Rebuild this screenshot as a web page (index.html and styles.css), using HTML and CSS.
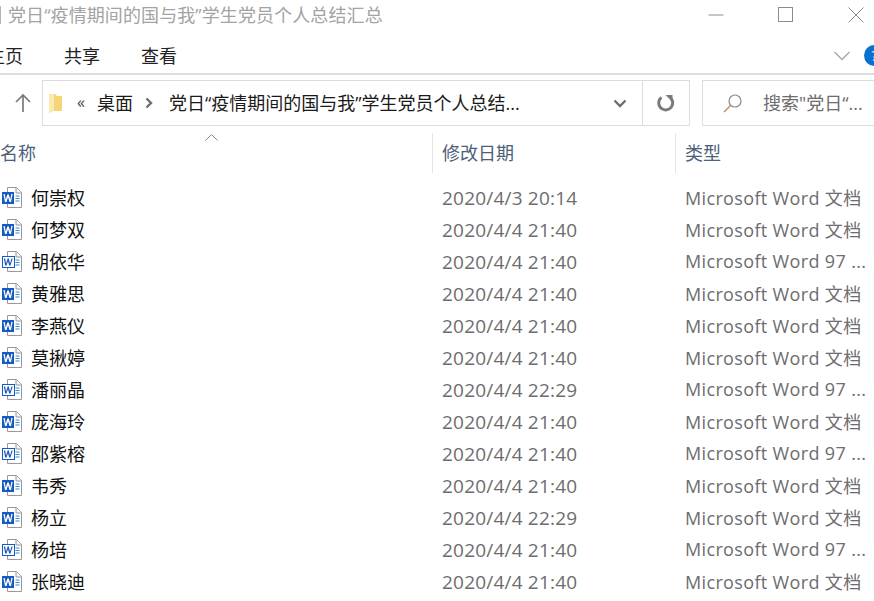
FILE: index.html
```html
<!DOCTYPE html>
<html lang="zh-CN">
<head>
<meta charset="utf-8">
<title>党日“疫情期间的国与我”学生党员个人总结汇总</title>
<link rel="stylesheet" href="styles.css">
</head>
<body>
<svg class="defs" width="0" height="0" aria-hidden="true">
  <symbol id="docx" viewBox="0 0 24 24">
    <path d="M7.5 1.5H16.5L21.5 6.5V21.5H7.5Z" fill="#fff" stroke="#999"/>
    <path d="M16 1.5V7H21.5" fill="#f4f4f4" stroke="#999"/>
    <path d="M15.5 10h4M15.5 12.5h4M15.5 15h4" stroke="#2f8be0"/>
    <rect x="2" y="6" width="12" height="12" fill="#185abd"/>
    <path d="M3.4 8l1.6 8h1.5L8 11.2 9.5 16H11l1.6-8h-1.3l-1 5.4L8.7 8.4H7.3l-1.6 5L4.7 8Z" fill="#fff"/>
  </symbol>
  <symbol id="doc" viewBox="0 0 24 24">
    <path d="M7.5 1.5H16.5L21.5 6.5V21.5H7.5Z" fill="#fff" stroke="#999"/>
    <path d="M16 1.5V7H21.5" fill="#f4f4f4" stroke="#999"/>
    <path d="M15.5 10h4M15.5 12.5h4M15.5 15h4" stroke="#2f8be0"/>
    <rect x="2.5" y="6.5" width="12" height="11" fill="#fff" stroke="#185abd"/>
    <path d="M3.8 8.4l1.4 7.2h1.3L8 11.2l1.2 4.4h1.3l2.2-7.2h-1.2l-1.5 5-1.2-5H7.6l-1.5 5-1-5Z" fill="#185abd"/>
  </symbol>
</svg>
<div class="window">
  <header class="titlebar">
    <span class="title-sep"></span>
    <span class="title">党日“疫情期间的国与我”学生党员个人总结汇总</span>
    <div class="win-controls">
      <svg class="ctl" width="16" height="16" viewBox="0 0 16 16"><path d="M0.5 8H15.5" stroke="#8c8c8c"/></svg>
      <svg class="ctl" width="16" height="16" viewBox="0 0 16 16"><rect x=".5" y=".5" width="14" height="14" fill="none" stroke="#8c8c8c"/></svg>
      <svg class="ctl" width="16" height="16" viewBox="0 0 16 16"><path d="M.5.5l15 15M15.5.5l-15 15" stroke="#8c8c8c"/></svg>
    </div>
  </header>
  <nav class="ribbon">
    <span class="tab tab-home">主页</span>
    <span class="tab">共享</span>
    <span class="tab">查看</span>
    <svg class="ribbon-chevron" width="18" height="10" viewBox="0 0 18 10"><path d="M1.5 1L9 8.5 16.5 1" fill="none" stroke="#a6a6a6" stroke-width="1.3"/></svg>
    <span class="help">?</span>
  </nav>
  <div class="addressrow">
    <svg class="up" width="18" height="20" viewBox="0 0 18 20"><path d="M9 19V2M2 9l7-7 7 7" fill="none" stroke="#7a7a7a" stroke-width="1.7"/></svg>
    <div class="address">
      <svg class="folder" width="15" height="22" viewBox="0 0 15 22"><path d="M1 2h6l2 2h5v15H5l-4 2Z" fill="#f5d47a"/><path d="M1 2h5v17l-5 2Z" fill="#fbe9ae"/></svg>
      <span class="crumb-more">«</span>
      <span class="crumb">桌面</span>
      <svg class="crumb-arrow" width="8" height="12" viewBox="0 0 8 12"><path d="M1.5 1.5L6 6 1.5 10.5" fill="none" stroke="#6e6e6e" stroke-width="2.4"/></svg>
      <span class="crumb crumb-long">党日“疫情期间的国与我”学生党员个人总结...</span>
      <svg class="addr-drop" width="14" height="9" viewBox="0 0 14 9"><path d="M1.5 1.5L7 7l5.5-5.5" fill="none" stroke="#6e6e6e" stroke-width="2.4"/></svg>
      <span class="refresh">
        <svg width="20" height="20" viewBox="0 0 20 20"><path d="M15.2 5.6A7 7 0 1 1 5.4 4.4" fill="none" stroke="#7a7a7a" stroke-width="3"/><path d="M9.5 2H16.5V9Z" fill="#7a7a7a"/></svg>
      </span>
    </div>
    <div class="search">
      <svg width="20" height="20" viewBox="0 0 20 20"><circle cx="12" cy="8" r="6" fill="none" stroke="#8c8c8c" stroke-width="1.2"/><path d="M7.5 12.5L1 19" stroke="#b9925f" stroke-width="1.4"/></svg>
      <span class="search-text">搜索"党日“...</span>
    </div>
  </div>
  <div class="list-header">
    <svg class="sort" width="13" height="7" viewBox="0 0 13 7"><path d="M.5 6.5l6-6 6 6" fill="none" stroke="#8c8c8c"/></svg>
    <span class="col col-name">名称</span>
    <span class="col col-date">修改日期</span>
    <span class="col col-type">类型</span>
  </div>
  <main class="rows">
    <div class="row"><svg class="file"><use href="#docx"/></svg><span class="name">何崇权</span><span class="date">2020/4/3 20:14</span><span class="type">Microsoft Word 文档</span></div>
    <div class="row"><svg class="file"><use href="#docx"/></svg><span class="name">何梦双</span><span class="date">2020/4/4 21:40</span><span class="type">Microsoft Word 文档</span></div>
    <div class="row"><svg class="file"><use href="#doc"/></svg><span class="name">胡依华</span><span class="date">2020/4/4 21:40</span><span class="type">Microsoft Word 97 ...</span></div>
    <div class="row"><svg class="file"><use href="#docx"/></svg><span class="name">黄雅思</span><span class="date">2020/4/4 21:40</span><span class="type">Microsoft Word 文档</span></div>
    <div class="row"><svg class="file"><use href="#docx"/></svg><span class="name">李燕仪</span><span class="date">2020/4/4 21:40</span><span class="type">Microsoft Word 文档</span></div>
    <div class="row"><svg class="file"><use href="#docx"/></svg><span class="name">莫揪婷</span><span class="date">2020/4/4 21:40</span><span class="type">Microsoft Word 文档</span></div>
    <div class="row"><svg class="file"><use href="#doc"/></svg><span class="name">潘丽晶</span><span class="date">2020/4/4 22:29</span><span class="type">Microsoft Word 97 ...</span></div>
    <div class="row"><svg class="file"><use href="#docx"/></svg><span class="name">庞海玲</span><span class="date">2020/4/4 21:40</span><span class="type">Microsoft Word 文档</span></div>
    <div class="row"><svg class="file"><use href="#doc"/></svg><span class="name">邵紫榕</span><span class="date">2020/4/4 21:40</span><span class="type">Microsoft Word 97 ...</span></div>
    <div class="row"><svg class="file"><use href="#docx"/></svg><span class="name">韦秀</span><span class="date">2020/4/4 21:40</span><span class="type">Microsoft Word 文档</span></div>
    <div class="row"><svg class="file"><use href="#docx"/></svg><span class="name">杨立</span><span class="date">2020/4/4 22:29</span><span class="type">Microsoft Word 文档</span></div>
    <div class="row"><svg class="file"><use href="#doc"/></svg><span class="name">杨培</span><span class="date">2020/4/4 21:40</span><span class="type">Microsoft Word 97 ...</span></div>
    <div class="row"><svg class="file"><use href="#docx"/></svg><span class="name">张晓迪</span><span class="date">2020/4/4 21:40</span><span class="type">Microsoft Word 文档</span></div>
  </main>
</div>
</body>
</html>
```
FILE: styles.css
```css
* { box-sizing: border-box; }
html, body { margin: 0; height: 100%; overflow: hidden; background: #fff; }
.defs { position: absolute; }
.window {
  width: 874px; height: 601px; overflow: hidden; background: #fff;
  font-family: "Open Sans", "Noto Sans CJK SC", sans-serif; font-size: 18px; color: #1a1a1a;
}
.titlebar { height: 30px; display: flex; align-items: center; }
.title-sep { width: 1px; height: 18px; background: #b5b5b5; margin-right: 7px; }
.title { color: #a3a3a3; font-size: 18px; line-height: 30px; margin-bottom: 1px; white-space: nowrap; letter-spacing: .1px; }
.win-controls { margin-left: auto; display: flex; gap: 54px; padding-right: 10px; }
.ctl { display: block; }
.ribbon {
  height: 45px; display: flex; align-items: center; border-bottom: 2px solid #dedede;
  padding-top: 6px;
}
.tab { font-size: 18px; margin-right: 41px; white-space: nowrap; color: #222; }
.tab-home { margin-left: -13px; }
.ribbon-chevron { margin-left: auto; margin-right: 13px; margin-top: 2px; }
.help {
  width: 21px; height: 21px; border-radius: 50%; background: #0a70d0; color: #fff; font-size: 14px;
  text-align: center; line-height: 21px; flex: none; margin-right: -11px; margin-top: 2px;
}
.addressrow { height: 46px; margin-top: 5px; display: flex; align-items: center; }
.up { margin: 0 0 0 14px; flex: none; }
.address {
  width: 648px; height: 46px; margin-left: 10px; border: 1.5px solid #dcdcdc;
  display: flex; align-items: center; padding-left: 5px; white-space: nowrap;
}
.folder { flex: none; margin-right: 14px; margin-bottom: 1px; }
.crumb-more { color: #444; font-size: 16px; margin-right: 12px; margin-bottom: 2px; }
.crumb { font-size: 18px; color: #1a1a1a; margin-bottom: 2px; }
.crumb-arrow { margin: 0 16px 0 12px; flex: none; }
.addr-drop { margin-left: auto; margin-right: 15px; flex: none; }
.refresh {
  width: 47px; height: 100%; border-left: 1.5px solid #dcdcdc; display: flex; align-items: center;
  justify-content: center; flex: none;
}
.search {
  flex: 1; height: 46px; margin-left: 12px; margin-right: -4px; border: 1.5px solid #dcdcdc; border-right: 0;
  display: flex; align-items: center; padding-left: 20px; gap: 20px; white-space: nowrap;
}
.search-text { color: #6d6d6d; font-size: 18px; margin-bottom: 2px; }
.list-header { position: relative; height: 40px; margin-top: 7px; display: flex; align-items: center; color: #4c607a; }
.sort { position: absolute; left: 205px; top: 1px; }
.col { height: 100%; display: flex; align-items: center; white-space: nowrap; font-size: 18px; padding-bottom: 2px; }
.col-name { width: 433px; border-right: 1px solid #e4e4e4; }
.col-date { width: 243px; padding-left: 9px; border-right: 1px solid #e4e4e4; }
.col-type { padding-left: 9px; }
.rows { padding-top: 8px; }
.row { height: 32px; display: flex; align-items: center; white-space: nowrap; }
.file { width: 24px; height: 24px; flex: none; margin-right: 7px; margin-top: 2px; }
.name { width: 411px; font-size: 18px; color: #111; }
.date { width: 243px; font-size: 19px; letter-spacing: .2px; color: #6d6d6d; padding-top: 2px; }
.type { font-size: 18px; letter-spacing: .35px; color: #6d6d6d; }
```
